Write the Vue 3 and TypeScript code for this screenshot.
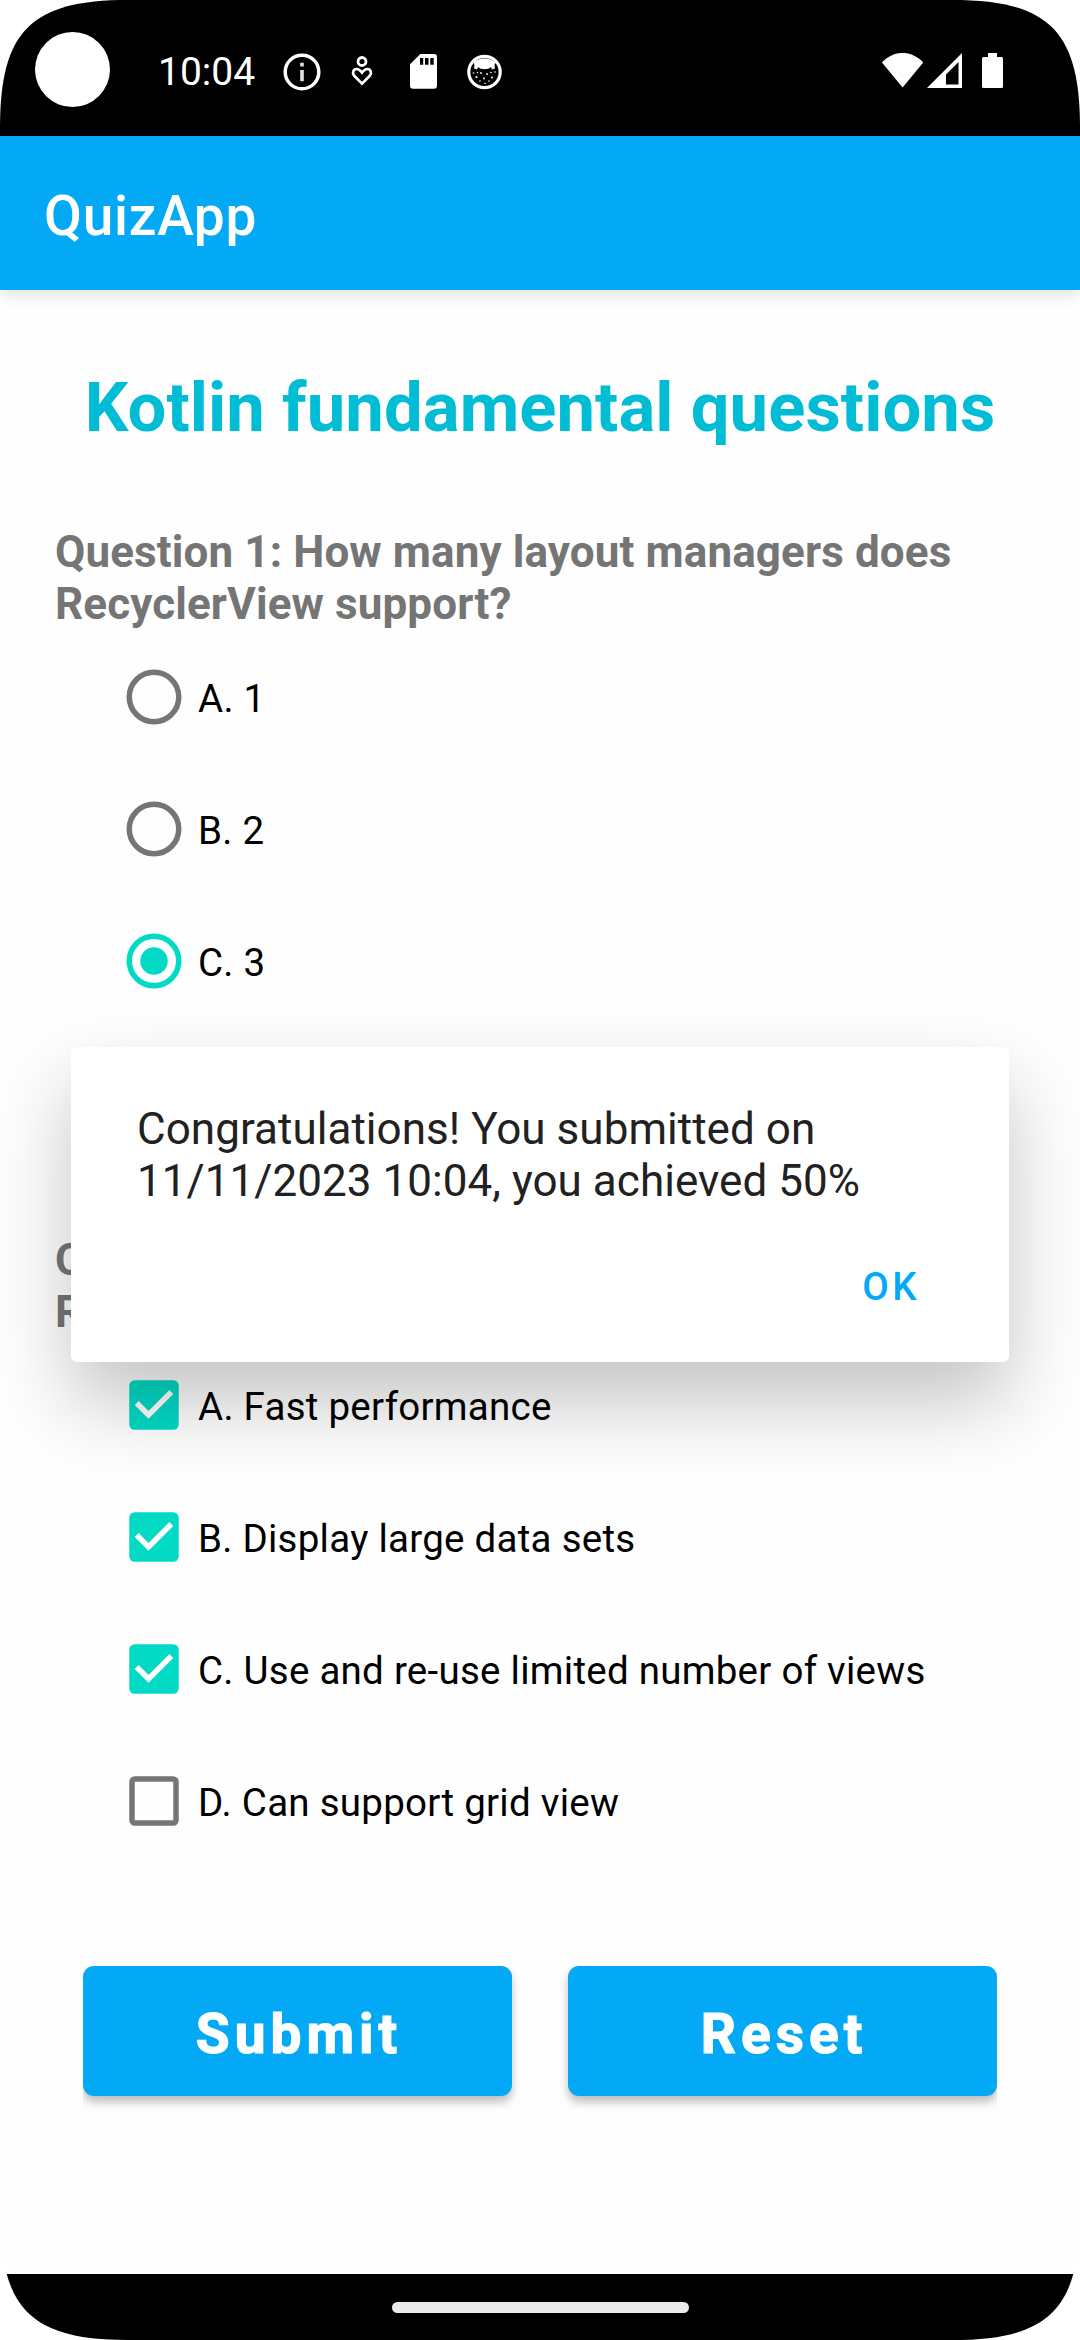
<script setup lang="ts">
import { ref } from 'vue'

interface Option {
  key: string
  label: string
}

const radioOptions: Option[] = [
  { key: 'A', label: '1' },
  { key: 'B', label: '2' },
  { key: 'C', label: '3' },
]

const checkOptions: Option[] = [
  { key: 'A', label: 'Fast performance' },
  { key: 'B', label: 'Display large data sets' },
  { key: 'C', label: 'Use and re-use limited number of views' },
  { key: 'D', label: 'Can support grid view' },
]

const selected = ref('C')
const checked = ref<string[]>(['A', 'B', 'C'])
const dialogOpen = ref(true)

function toggle(key: string) {
  checked.value = checked.value.includes(key)
    ? checked.value.filter((k) => k !== key)
    : [...checked.value, key]
}

function reset() {
  selected.value = ''
  checked.value = []
}
</script>

<template>
  <div class="screen">
    <header class="status">
      <span class="camera"></span>
      <span class="clock">10:04</span>
      <svg class="ic-info" width="38" height="38" viewBox="0 0 38 38">
        <circle cx="19" cy="19" r="16.8" fill="none" stroke="#fff" stroke-width="3.5" />
        <path d="M17.2 9.8h3.6v3.6h-3.6zM17.2 17h3.6v11.2h-3.6z" fill="#e0e0e0" />
      </svg>
      <svg class="ic-heart" width="22" height="32" viewBox="0 0 22 32">
        <circle cx="11" cy="6.5" r="4" fill="none" stroke="#fff" stroke-width="2.8" />
        <path
          d="M11 28.6 3.2 20.8C1 18.2 2 14.4 5.4 14c2.6-.2 4 1.6 5.6 3.6 1.6-2 3-3.8 5.6-3.6 3.4.4 4.4 4.2 2.2 6.8z"
          fill="none" stroke="#fff" stroke-width="2.7" />
      </svg>
      <svg class="ic-sd" width="27" height="35" viewBox="0 0 27 35">
        <path
          fill-rule="evenodd" fill="#fff"
          d="M10.3 0H24a3 3 0 0 1 3 3v28.7a3 3 0 0 1-3 3H3a3 3 0 0 1-3-3V10.3zM10 4v6.8h3.2V4zM15 4v6.8h3.5V4zM20.3 4v6.8h3.4V4z" />
      </svg>
      <svg class="ic-cat" width="35" height="36" viewBox="0 0 35 36">
        <circle cx="17.5" cy="18" r="15.7" fill="#000" stroke="#fff" stroke-width="3.2" />
        <path d="M6.5 9C10 3 25 3 28.500 9L27.500 11 28 14.500 25 15.500 24 13C21 16 14 16 11 13L10 15.500 7 14.500 7.500 11z" fill="#fff" />
        <g fill="#fff">
          <circle cx="9.5" cy="23" r="1.1" /><circle cx="25" cy="23.5" r="1" />
          <circle cx="14" cy="19" r=".9" /><circle cx="20" cy="20" r=".9" />
          <circle cx="17" cy="24.5" r=".9" /><circle cx="13" cy="27" r=".8" />
          <circle cx="22" cy="27" r=".8" /><circle cx="28" cy="18" r=".8" />
          <circle cx="6.5" cy="19" r=".8" /><circle cx="18" cy="29.5" r=".8" />
          <circle cx="24" cy="18.5" r=".8" /><circle cx="10.5" cy="18.5" r=".7" />
        </g>
      </svg>
      <span class="grow"></span>
      <svg class="ic-wifi" width="42" height="36" viewBox="0 0 42 36">
        <path d="M0 9.4C12-3.2 29-3.2 41.2 9.4L20.6 34.6z" fill="#fff" />
      </svg>
      <svg class="ic-signal" width="36" height="36" viewBox="0 0 36 36">
        <path fill-rule="evenodd" fill="#fff" d="M0 35 35 0V35zM19 21.5V31.5H31.5V9z" />
      </svg>
      <svg class="ic-battery" width="21" height="35" viewBox="0 0 21 35">
        <path d="M6 0h9v4h4.5A1.500 1.500 0 0 1 21 5.500v28a1.500 1.500 0 0 1-1.500 1.500h-18A1.500 1.500 0 0 1 0 33.500v-28A1.500 1.500 0 0 1 1.500 4H6z" fill="#fff" />
      </svg>
    </header>

    <div class="appbar">QuizApp</div>

    <main class="content">
      <h1>Kotlin fundamental questions</h1>

      <section>
        <h2>Question 1: How many layout managers does RecyclerView support?</h2>
        <ul class="options">
          <li v-for="o in radioOptions" :key="o.key" @click="selected = o.key">
            <span class="box">
              <svg class="radio" :class="{ on: selected === o.key }" width="66" height="66" viewBox="0 0 24 24">
                <circle class="ring" cx="12" cy="12" r="9" />
                <circle v-if="selected === o.key" class="dot" cx="12" cy="12" r="5" />
              </svg>
            </span>
            <span class="label">{{ o.key }}. {{ o.label }}</span>
          </li>
        </ul>
      </section>

      <section class="second">
        <h2>Question 2:<br />RecyclerView</h2>
        <ul class="options">
          <li v-for="o in checkOptions" :key="o.key" @click="toggle(o.key)">
            <span class="box">
              <svg v-if="checked.includes(o.key)" width="66" height="66" viewBox="0 0 24 24">
                <rect x="3" y="3" width="18" height="18" rx="2" fill="#03dac5" />
                <path d="M10 17l-5-5 1.41-1.41L10 14.17l7.59-7.59L19 8z" fill="#fff" />
              </svg>
              <svg v-else width="66" height="66" viewBox="0 0 24 24">
                <rect x="4" y="4" width="16" height="16" rx="1" fill="none" stroke="#757575" stroke-width="2" />
              </svg>
            </span>
            <span class="label">{{ o.key }}. {{ o.label }}</span>
          </li>
        </ul>
      </section>

      <div class="actions">
        <button @click="dialogOpen = true">Submit</button>
        <button @click="reset">Reset</button>
      </div>
    </main>

    <footer class="nav"><span class="handle"></span></footer>

    <div v-if="dialogOpen" class="dialog">
      <p>Congratulations! You submitted on 11/11/2023 10:04, you achieved 50%</p>
      <button class="ok" @click="dialogOpen = false">OK</button>
    </div>
  </div>
</template>

<style>
body {
  margin: 0;
  background: #fff;
}
</style>

<style scoped>
.screen {
  position: relative;
  display: flex;
  flex-direction: column;
  width: 1080px;
  height: 2340px;
  overflow: hidden;
  background: #fefefe;
  font-family: Roboto, sans-serif;
  clip-path: path('M0 128C0 31 31 0 128 0H952C1049 0 1080 31 1080 128V2212C1080 2309 1049 2340 952 2340H128C31 2340 0 2309 0 2212Z');
}

.status {
  display: flex;
  align-items: flex-start;
  box-sizing: border-box;
  height: 136px;
  flex: none;
  padding: 32px 77px 0 35px;
  background: #000;
  color: #fff;
}
.status svg {
  display: block;
  flex: none;
}
.camera {
  width: 75px;
  height: 75px;
  border-radius: 50%;
  background: #fff;
}
.clock {
  width: 125px;
  margin: 17px 0 0 48px;
  font-size: 39px;
  line-height: 47px;
}
.ic-info { margin-top: 20.5px; }
.ic-heart { margin: 23px 0 0 30px; }
.ic-sd { margin: 22px 0 0 37px; }
.ic-cat { margin: 21.5px 0 0 30px; }
.grow { flex: 1; }
.ic-wifi { margin: 21px 0 0; }
.ic-signal { margin: 21px 0 0 3px; }
.ic-battery { margin: 21px 0 0 19px; }

.appbar {
  display: flex;
  align-items: center;
  box-sizing: border-box;
  flex: none;
  height: 154px;
  padding: 6px 44px 0;
  background: #03a9f4;
  box-shadow: 0 4px 16px rgba(0, 0, 0, 0.12);
  color: #fff;
  font-size: 55px;
  font-weight: 500;
  letter-spacing: 0.0135em;
}

.content {
  flex: 1;
  padding: 78px 55px 0;
}
h1 {
  margin: 0 0 78px;
  color: #00bcd4;
  font-size: 68.75px;
  font-weight: 700;
  letter-spacing: 0.08px;
  line-height: 80px;
  text-align: center;
  white-space: nowrap;
}
h2 {
  margin: 0 0 1px;
  color: #757575;
  font-size: 44px;
  font-weight: 700;
  letter-spacing: 0.11px;
  line-height: 52px;
}
.second {
  margin-top: 207px;
}
.options {
  margin: 0;
  padding: 0 0 0 66px;
  list-style: none;
}
.options li {
  display: flex;
  align-items: center;
  height: 132px;
}
.box {
  display: flex;
  align-items: center;
  justify-content: center;
  width: 66px;
  height: 66px;
}
.ring {
  fill: none;
  stroke: #757575;
  stroke-width: 2px;
}
.radio.on .ring {
  stroke: #03dac5;
}
.dot {
  fill: #03dac5;
}
.label {
  padding: 3px 0 0 11px;
  color: #000;
  font-size: 38.5px;
  letter-spacing: 0.26px;
  line-height: 45px;
}

.actions {
  display: flex;
  gap: 56px;
  height: 160px;
  margin: 99px 28px 0;
  overflow: hidden;
}
.actions button {
  flex: 1;
  height: 130px;
  padding: 5px 0 0 3px;
  border: 0;
  border-radius: 11px;
  background: #03a9f4;
  box-shadow: 0 6px 10px rgba(0, 0, 0, 0.26);
  color: #fff;
  font: 700 55px Roboto, sans-serif;
  letter-spacing: 5px;
  -webkit-text-stroke: 1.2px #fff;
}

.nav {
  display: flex;
  align-items: center;
  justify-content: center;
  flex: none;
  height: 66px;
  background: #000;
}
.handle {
  width: 297px;
  height: 11px;
  border-radius: 5.5px;
  background: #ebebeb;
}

.dialog {
  position: absolute;
  top: 1047px;
  left: 71px;
  display: flex;
  flex-direction: column;
  align-items: flex-end;
  box-sizing: border-box;
  width: 938px;
  height: 315px;
  padding: 56px 66px 0;
  border-radius: 6px;
  background: #fff;
  box-shadow: 0 40px 80px rgba(0, 0, 0, 0.23);
}
.dialog p {
  width: 100%;
  margin: 0;
  color: #212121;
  font-size: 44px;
  letter-spacing: 0.04px;
  line-height: 52px;
}
.ok {
  margin: 57px 23px 0 0;
  padding: 0;
  border: 0;
  background: none;
  color: #03a9f4;
  font: 500 38.5px/45px Roboto, sans-serif;
  letter-spacing: 0.0892857em;
}
</style>
